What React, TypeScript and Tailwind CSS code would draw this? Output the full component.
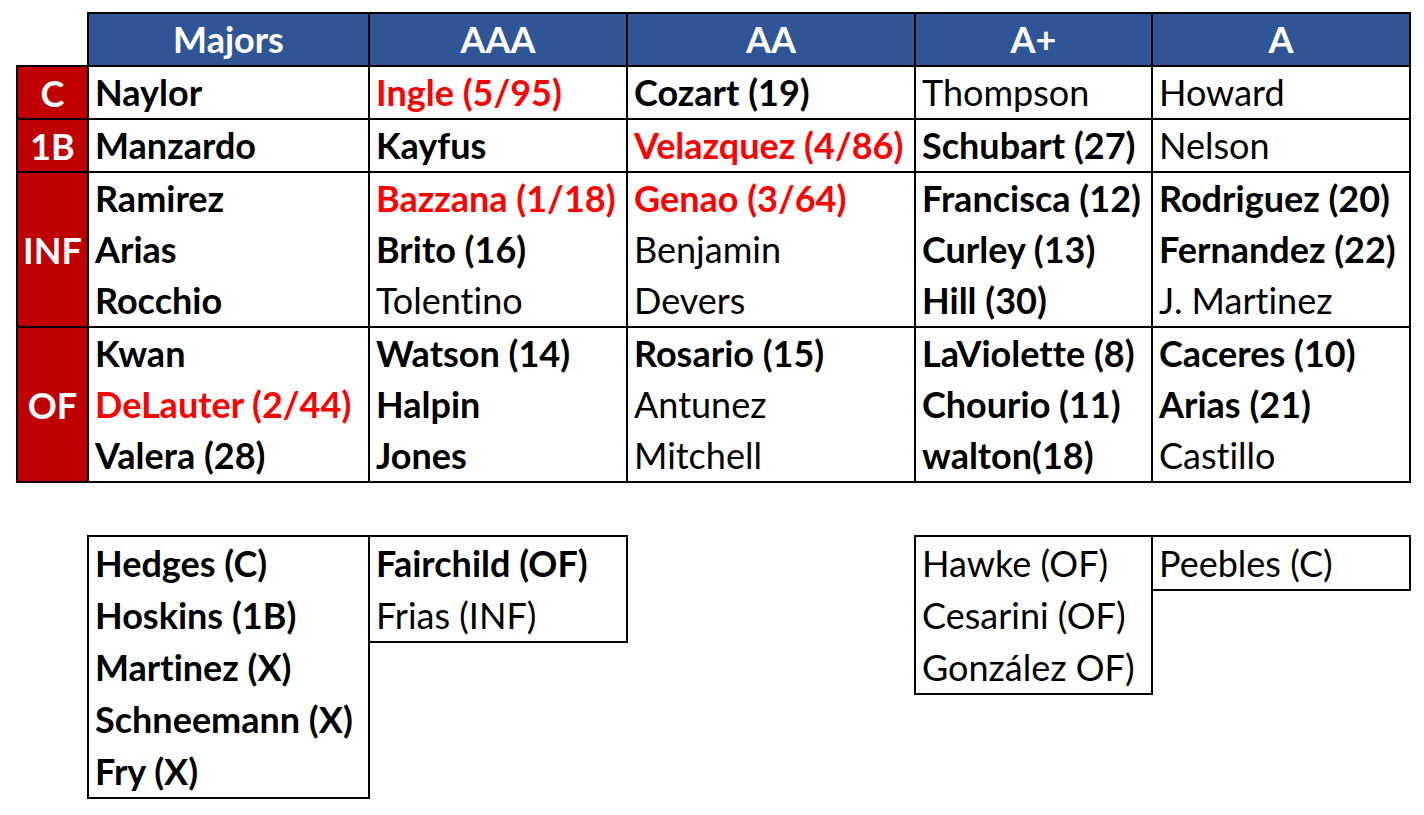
import React from "react";

type Entry = { t: string; b?: boolean; r?: boolean };

const B = (t: string): Entry => ({ t, b: true });
const R = (t: string): Entry => ({ t });
const RED = (t: string): Entry => ({ t, b: true, r: true });

const rows: { label: string; cells: Entry[][] }[] = [
  {
    label: "C",
    cells: [[B("Naylor")], [RED("Ingle (5/95)")], [B("Cozart (19)")], [R("Thompson")], [R("Howard")]],
  },
  {
    label: "1B",
    cells: [[B("Manzardo")], [B("Kayfus")], [RED("Velazquez (4/86)")], [B("Schubart (27)")], [R("Nelson")]],
  },
  {
    label: "INF",
    cells: [
      [B("Ramirez"), B("Arias"), B("Rocchio")],
      [RED("Bazzana (1/18)"), B("Brito (16)"), R("Tolentino")],
      [RED("Genao (3/64)"), R("Benjamin"), R("Devers")],
      [B("Francisca (12)"), B("Curley (13)"), B("Hill (30)")],
      [B("Rodriguez (20)"), B("Fernandez (22)"), R("J. Martinez")],
    ],
  },
  {
    label: "OF",
    cells: [
      [B("Kwan"), RED("DeLauter (2/44)"), B("Valera (28)")],
      [B("Watson (14)"), B("Halpin"), B("Jones")],
      [B("Rosario (15)"), R("Antunez"), R("Mitchell")],
      [B("LaViolette (8)"), B("Chourio (11)"), B("walton(18)")],
      [B("Caceres (10)"), B("Arias (21)"), R("Castillo")],
    ],
  },
];

const headers = ["Majors", "AAA", "AA", "A+", "A"];

function Line({ e, lh = "h-[51px] leading-[51px]" }: { e: Entry; lh?: string }) {
  return (
    <div
      className={`${lh} whitespace-nowrap ${e.b ? "font-bold" : "font-normal"} ${
        e.r ? "text-[#ff0000]" : "text-black"
      }`}
    >
      {e.t}
    </div>
  );
}

function Box({ items, className }: { items: Entry[]; className: string }) {
  return (
    <div className={`${className} border-black pl-[6px]`}>
      {items.map((e, i) => (
        <Line key={i} e={e} lh="h-[52px] leading-[52px]" />
      ))}
    </div>
  );
}

export default function App() {
  return (
    <div
      className="w-[1424px] h-[815px] bg-white overflow-hidden text-[36px] leading-[51px] [font-variant-ligatures:none]"
      style={{ fontFamily: "Lato, 'Noto Sans', sans-serif" }}
    >
      <div className="pt-[12px] pl-[16px]">
        <table className="table-fixed border-collapse w-[1393px]">
          <colgroup>
            <col className="w-[71px]" />
            <col className="w-[281px]" />
            <col className="w-[258px]" />
            <col className="w-[288px]" />
            <col className="w-[237px]" />
            <col className="w-[258px]" />
          </colgroup>
          <thead>
            <tr>
              <th className="p-0"></th>
              {headers.map((h) => (
                <th
                  key={h}
                  className="p-0 border-2 border-black bg-[#2f5597] text-white font-bold text-center h-[51px] leading-[51px]"
                >
                  {h}
                </th>
              ))}
            </tr>
          </thead>
          <tbody>
            {rows.map((row) => (
              <tr key={row.label}>
                <td className="p-0 border-2 border-black bg-[#c00000] text-white font-bold text-center align-middle leading-[40px]">
                  {row.label}
                </td>
                {row.cells.map((cell, ci) => (
                  <td key={ci} className="p-0 pl-[6px] border-2 border-black align-top">
                    {cell.map((e, i) => (
                      <Line key={i} e={e} />
                    ))}
                  </td>
                ))}
              </tr>
            ))}
          </tbody>
        </table>
      </div>
      <div className="flex items-start mt-[52px] pl-[87px]">
        <Box
          className="w-[283px] border-2"
          items={[B("Hedges (C)"), B("Hoskins (1B)"), B("Martinez (X)"), B("Schneemann (X)"), B("Fry (X)")]}
        />
        <Box className="w-[258px] border-2 border-l-0" items={[B("Fairchild (OF)"), R("Frias (INF)")]} />
        <div className="w-[286px] shrink-0" />
        <Box
          className="w-[239px] border-2"
          items={[R("Hawke (OF)"), R("Cesarini (OF)"), R("González OF)")]}
        />
        <Box className="w-[258px] border-2 border-l-0" items={[R("Peebles (C)")]} />
      </div>
    </div>
  );
}
